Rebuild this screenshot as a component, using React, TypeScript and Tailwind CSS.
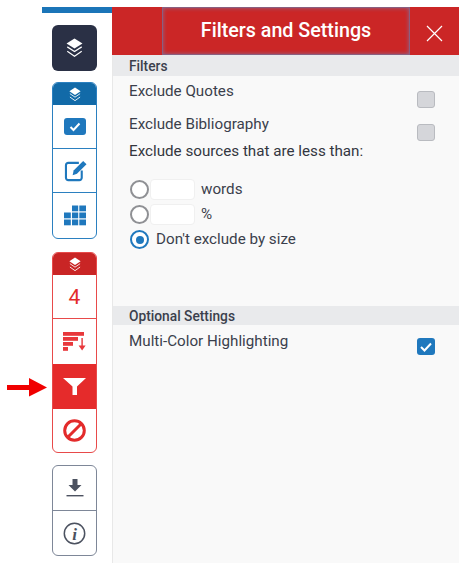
import React from "react";

const Layers = ({ w = 16, h = 18, color = "#fff" }: { w?: number; h?: number; color?: string }) => (
  <svg width={w} height={h} viewBox="0 0 16 18" fill="none" preserveAspectRatio="none">
    <path d="M8 0.5 L15.5 5 L8 9.5 L0.5 5 Z" fill={color} />
    <path d="M1.2 8 L8 12.2 L14.8 8" stroke={color} strokeWidth="1.1" />
    <path d="M1.2 12 L8 16.4 L14.8 12" stroke={color} strokeWidth="1.1" />
  </svg>
);

const Cell = ({ children, className = "" }: { children: React.ReactNode; className?: string }) => (
  <div className={`flex items-center justify-center ${className}`}>{children}</div>
);

const Radio = () => <div className="w-[19px] h-[19px] rounded-full border-[2.5px] border-[#8f9094] bg-white shrink-0" />;
const Box = () => <div className="w-[18px] h-[17px] rounded-[3px] border border-[#b9bbc0] bg-[#d5d6da]" />;
const Input = () => <div className="w-[45px] h-[21px] rounded-[4px] border border-[#f0f0f0] bg-white ml-px" />;

export default function App() {
  return (
    <div className="relative w-[467px] h-[570px] bg-white overflow-hidden text-[15.2px] text-[#3b3f4c] [font-family:Roboto,sans-serif]">
      <div className="flex pt-[7px] pl-[42px]">
        <div className="w-[70px] shrink-0">
          <div className="h-[6px] bg-[#1b75b8]" />
          <div className="ml-[10px] w-[45px] mt-[12px] flex flex-col">
            <Cell className="h-[46px] rounded-[6px] bg-[#2a3045]"><Layers w={17} h={20} /></Cell>

            <div className="mt-[11px] h-[157px] rounded-[6px] border border-[#2b80c0] flex flex-col overflow-hidden">
              <Cell className="h-[22px] shrink-0 bg-[#126aa8] -mx-px"><Layers w={12} h={15} /></Cell>
              <Cell className="h-[44px] border-b border-[#2b80c0]">
                <div className="w-[22px] h-[17px] rounded-[3px] bg-[#1f78bd] flex items-center justify-center">
                  <svg width="12" height="10" viewBox="0 0 12 10" fill="none"><path d="M1.5 5 L4.5 8 L10.5 1.5" stroke="#fff" strokeWidth="2" /></svg>
                </div>
              </Cell>
              <Cell className="h-[44px] border-b border-[#2b80c0]">
                <svg width="24" height="22" viewBox="0 0 24 23" fill="none" className="ml-[3px]">
                  <path d="M15 3 H4 A2.5 2.5 0 0 0 1.5 5.5 V18.5 A2.5 2.5 0 0 0 4 21 H15.5 A2.5 2.5 0 0 0 18 18.5 V11" stroke="#1f78bd" strokeWidth="2.2" />
                  <path d="M19.5 1 L23 4.5 L13 14.5 L8.5 16 L9.5 11 Z" fill="#1f78bd" />
                </svg>
              </Cell>
              <Cell className="flex-1">
                <svg width="22" height="21" viewBox="0 0 22 20" fill="#1f78bd">
                  <rect x="8" y="0" width="6.2" height="5.8" /><rect x="15.3" y="0" width="6.7" height="5.8" />
                  <rect x="0" y="7" width="6.8" height="5.8" /><rect x="8" y="7" width="6.2" height="5.8" /><rect x="15.3" y="7" width="6.7" height="5.8" />
                  <rect x="0" y="14" width="6.8" height="5.8" /><rect x="8" y="14" width="6.2" height="5.8" /><rect x="15.3" y="14" width="6.7" height="5.8" />
                </svg>
              </Cell>
            </div>

            <div className="mt-[13px] h-[201px] rounded-[6px] border border-[#e84a4a] flex flex-col overflow-hidden">
              <Cell className="h-[22px] shrink-0 bg-[#c92525] -mx-px"><Layers w={12} h={15} /></Cell>
              <Cell className="h-[44px] pt-[3px] border-b border-[#e84a4a] text-[21px] text-[#e32b2b]">4</Cell>
              <Cell className="h-[45px]">
                <svg width="24" height="19" viewBox="0 0 24 19" fill="#e8383c">
                  <rect x="0" y="0" width="21" height="3.8" /><rect x="0" y="5" width="15" height="3.8" />
                  <rect x="0" y="10" width="10" height="3.8" /><rect x="0" y="15" width="5" height="3.8" />
                  <rect x="18.4" y="6" width="1.4" height="10" /><path d="M15.6 13.5 H22.6 L19.1 18.5 Z" />
                </svg>
              </Cell>
              <Cell className="h-[45px] bg-[#e52b2b] -mx-px">
                <svg width="23" height="17" viewBox="0 0 23 17" fill="#fff"><path d="M0 0 H23 L14 8.5 V17 H9.5 V8.5 Z" /></svg>
              </Cell>
              <Cell className="flex-1">
                <svg width="23" height="23" viewBox="0 0 23 23" fill="none" stroke="#e32b2b" strokeWidth="3"><circle cx="11.5" cy="11.5" r="9.8" /><path d="M18.5 4.5 L4.5 18.5" /></svg>
              </Cell>
            </div>

            <div className="mt-[12px] h-[91px] rounded-[6px] border border-[#7e8798] flex flex-col overflow-hidden">
              <Cell className="h-[45px] shrink-0 border-b border-[#7e8798]">
                <svg width="18" height="18" viewBox="0 0 18 18" fill="#4c5260">
                  <path d="M6.5 0 H11.5 V6 H15.5 L9 12.5 L2.5 6 H6.5 Z" /><rect x="0.5" y="16" width="17" height="1.4" />
                </svg>
              </Cell>
              <Cell className="flex-1">
                <svg width="23" height="23" viewBox="0 0 23 23" fill="none">
                  <circle cx="11.5" cy="11.5" r="10.2" stroke="#4c5260" strokeWidth="1.5" />
                  <text x="11.5" y="17.5" textAnchor="middle" fontSize="17" fontStyle="italic" fontWeight="700" fontFamily="'Liberation Serif', serif" fill="#4c5260">i</text>
                </svg>
              </Cell>
            </div>
          </div>
        </div>

        <div className="w-[347px] h-[556px] shrink-0 flex flex-col bg-[#f9f9f9] border-l border-[#e8e8e8]">
          <div className="h-[48px] shrink-0 -ml-px bg-[#cb2626] flex">
            <div className="w-[50px]" />
            <div className="w-[248px] flex items-center justify-center text-white text-[19.7px] font-medium border border-[#8a5f80] shadow-[inset_0_0_4px_#8a6a90]">Filters and Settings</div>
            <Cell className="flex-1 pt-[4px]">
              <svg width="17" height="17" viewBox="0 0 17 17" stroke="#fff" strokeWidth="1.2"><path d="M1 1 L16 16 M16 1 L1 16" /></svg>
            </Cell>
          </div>

          <div className="h-[21px] shrink-0 bg-[#e9eaec] pl-[16px] leading-[22px] text-[13.75px] font-medium">Filters</div>

          <div className="h-[33px] flex pl-[16px] pr-[24px] justify-between">
            <span className="pt-[7px] leading-[17px]">Exclude Quotes</span>
            <div className="pt-[15px]"><Box /></div>
          </div>
          <div className="h-[33px] flex pl-[16px] pr-[24px] justify-between">
            <span className="pt-[7px] leading-[17px]">Exclude Bibliography</span>
            <div className="pt-[15px]"><Box /></div>
          </div>
          <div className="pl-[16px] h-[24px] leading-[17px] pt-[1px] text-[#33363f]">Exclude sources that are less than:</div>

          <div className="pl-[17px] mt-[11px] flex flex-col">
            <div className="h-[25px] flex items-center"><Radio /><Input /><span className="ml-[6px]">words</span></div>
            <div className="h-[25px] flex items-center"><Radio /><Input /><span className="ml-[6px]">%</span></div>
            <div className="h-[25px] flex items-center">
              <div className="w-[19px] h-[19px] rounded-full border-[2.5px] border-[#1f78bd] bg-white flex items-center justify-center shrink-0">
                <div className="w-[8px] h-[8px] rounded-full bg-[#1f78bd]" />
              </div>
              <span className="ml-[7px]">Don't exclude by size</span>
            </div>
          </div>

          <div className="mt-[54px] h-[19px] shrink-0 bg-[#e9eaec] pl-[16px] leading-[20px] text-[13.75px] font-medium">Optional Settings</div>
          <div className="h-[33px] flex pl-[16px] pr-[24px] justify-between">
            <span className="pt-[8px] leading-[17px]">Multi-Color Highlighting</span>
            <div className="pt-[13px]">
              <div className="w-[18px] h-[17px] rounded-[3px] bg-[#1f78bd] flex items-center justify-center">
                <svg width="12" height="10" viewBox="0 0 12 10" fill="none"><path d="M1 5 L4.5 8.5 L11 1.5" stroke="#fff" strokeWidth="2" /></svg>
              </div>
            </div>
          </div>
        </div>
      </div>

      <svg className="absolute left-[7px] top-[378px]" width="41" height="19" viewBox="0 0 41 19" fill="#f00000">
        <path d="M0 7 H22 V0 L40 9.5 L22 18.5 V12 H0 Z" />
      </svg>
    </div>
  );
}
